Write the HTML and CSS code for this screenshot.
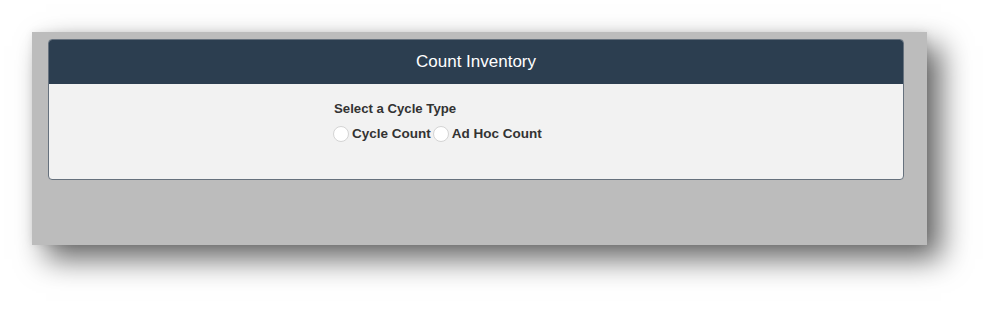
FILE: index.html
```html
<!DOCTYPE html>
<html lang="en">
<head>
    <meta charset="UTF-8">
    <meta name="viewport" content="width=device-width, initial-scale=1.0">
    <title>Count Inventory</title>
    <link rel="stylesheet" href="styles.css">
</head>
<body>
    <div class="frame">
        <div class="panel">
            <div class="card">
                <div class="card-header">Count Inventory</div>
                <div class="card-body">
                    <div class="col">
                        <div class="field-label">Select a Cycle Type</div>
                        <div class="radio-row">
                            <label class="radio"><input type="radio" name="cycle" value="cycle"> Cycle Count</label>
                            <label class="radio"><input type="radio" name="cycle" value="adhoc"> Ad Hoc Count</label>
                        </div>
                    </div>
                </div>
            </div>
        </div>
    </div>
</body>
</html>
```

FILE: styles.css
```css
body {
    margin: 0;
    background: #fff;
    font-family: "Liberation Sans", Arial, sans-serif;
}
.frame {
    padding: 32px 0 65px 32px;
}
.panel {
    width: 879px;
    height: 206px;
    padding: 7px 0 0 16px;
    background: #bcbcbc;
    box-shadow: 14px 14px 28px rgba(0, 0, 0, 0.6), 0 0 8px rgba(0, 0, 0, 0.08);
}
.card {
    width: 854px;
    height: 139px;
    border: 1px solid #66717d;
    border-radius: 4px;
    overflow: hidden;
    background: #f2f2f2;
}
.card-header {
    height: 44px;
    line-height: 44px;
    background: #2c3e50;
    color: #fff;
    font-size: 17px;
    text-align: center;
}
.card-body {
    padding: 16px 0 0 284px;
}
.field-label {
    font-size: 13.2px;
    font-weight: bold;
    color: #333;
    line-height: 18px;
    padding-left: 1px;
}
.radio-row {
    display: flex;
    margin-top: 7px;
}
.radio {
    display: flex;
    align-items: center;
    gap: 3px;
    margin-right: 2px;
    font-size: 13.5px;
    font-weight: bold;
    color: #333;
    line-height: 18px;
}
.radio input {
    appearance: none;
    width: 16px;
    height: 16px;
    margin: 0;
    border: 1px solid #d4d4d4;
    border-radius: 50%;
    background: #fff;
}
```
